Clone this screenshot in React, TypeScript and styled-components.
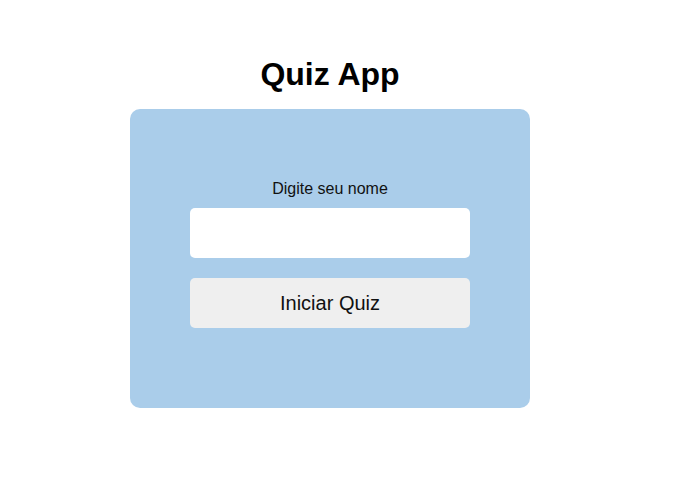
import React from "react";
import styled, { createGlobalStyle } from "styled-components";

const Global = createGlobalStyle`
  html, body { margin: 0; padding: 0; background: #ffffff; }
  body { font-family: "Liberation Sans", Arial, sans-serif; color: #000; }
`;

const Page = styled.div`
  width: 660px;
  display: flex;
  flex-direction: column;
  align-items: center;
  padding-top: 56px;
`;

const Title = styled.h1`
  margin: 0 0 16px;
  font-size: 32px;
  line-height: 37px;
  font-weight: 700;
`;

const Card = styled.div`
  width: 400px;
  box-sizing: border-box;
  height: 299px;
  background: #aacdea;
  border-radius: 10px;
  padding: 71px 60px 0;
  display: flex;
  flex-direction: column;
  align-items: center;
`;

const Label = styled.label`
  font-size: 16px;
  line-height: 18px;
  color: #111;
  margin-bottom: 10px;
`;

const Input = styled.input`
  width: 280px;
  height: 50px;
  box-sizing: border-box;
  border: none;
  border-radius: 5px;
  background: #fff;
  padding: 0 10px;
  font-size: 16px;
  font-family: inherit;
  outline: none;
  margin-bottom: 20px;
`;

const Button = styled.button`
  width: 280px;
  height: 50px;
  border: none;
  border-radius: 5px;
  background: #efefef;
  font-family: "Liberation Sans", Arial, sans-serif;
  font-size: 20px;
  color: #111;
  cursor: pointer;
`;

export default function App() {
  return (
    <>
      <Global />
      <Page>
        <Title>Quiz App</Title>
        <Card>
          <Label htmlFor="nome">Digite seu nome</Label>
          <Input id="nome" type="text" />
          <Button>Iniciar Quiz</Button>
        </Card>
      </Page>
    </>
  );
}
